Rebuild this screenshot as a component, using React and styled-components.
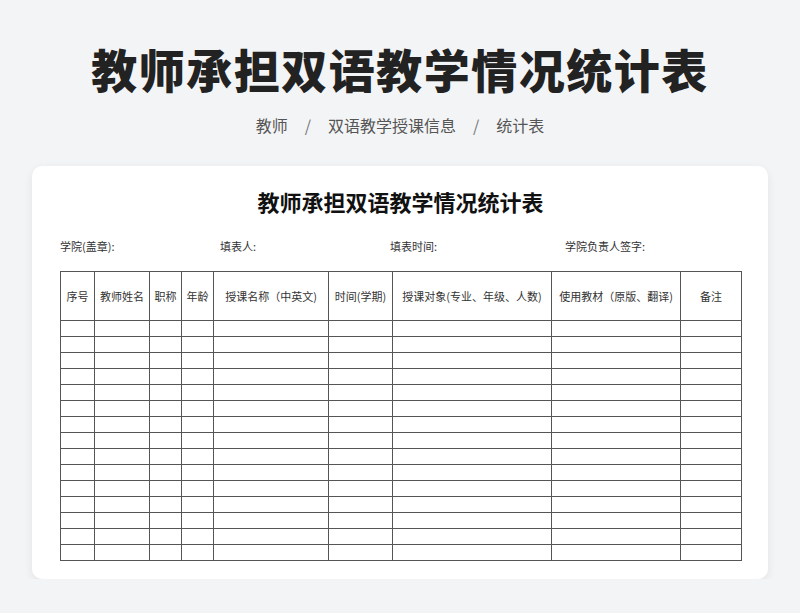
import React from "react";
import styled, { createGlobalStyle } from "styled-components";

const G = createGlobalStyle`
  body{margin:0;background:#f3f4f6;font-family:"Noto Sans CJK SC","Noto Sans",sans-serif;}
`;
const Page = styled.div`display:flex;flex-direction:column;align-items:center;padding-top:36px;`;
const Title = styled.h1`margin:0;font-size:46px;line-height:64px;font-weight:900;color:#222;letter-spacing:1.5px;`;
const Crumbs = styled.div`margin-top:14px;font-size:16px;color:#555;display:flex;gap:17px;line-height:22px;`;
const Sep = styled.span`color:#777;`;
const Card = styled.div`margin-top:30px;width:736px;height:413px;box-sizing:border-box;background:#fff;border-radius:10px;box-shadow:0 3px 10px rgba(0,0,0,0.07);padding:20px 27px 0 28px;`;
const CardTitle = styled.div`text-align:center;font-size:22px;font-weight:700;color:#111;line-height:30px;`;
const Meta = styled.div`display:grid;grid-template-columns:160px 170px 175px 1fr;margin-top:22px;font-size:11px;color:#333;line-height:16px;`;
const Table = styled.table`margin-top:17px;border-collapse:collapse;table-layout:fixed;width:682px;`;
const Th = styled.th`border:1px solid #555;height:48px;font-size:11px;font-weight:400;color:#333;padding:0;white-space:nowrap;`;
const Td = styled.td`border:1px solid #555;height:15px;padding:0;`;

const cols = [["序号",34],["教师姓名",55],["职称",32],["年龄",32],["授课名称（中英文)",115],["时间(学期)",64],["授课对象(专业、年级、人数)",159],["使用教材（原版、翻译)",129],["备注",61]];

export default function App(){
  return <Page><G/>
    <Title>教师承担双语教学情况统计表</Title>
    <Crumbs><span>教师</span><Sep>/</Sep><span>双语教学授课信息</span><Sep>/</Sep><span>统计表</span></Crumbs>
    <Card>
      <CardTitle>教师承担双语教学情况统计表</CardTitle>
      <Meta><span>学院(盖章):</span><span>填表人:</span><span>填表时间:</span><span>学院负责人签字:</span></Meta>
      <Table>
        <colgroup>{cols.map(([n,w])=><col key={n} style={{width:w}}/>)}</colgroup>
        <thead><tr>{cols.map(([n])=><Th key={n}>{n}</Th>)}</tr></thead>
        <tbody>{Array.from({length:15}).map((_,i)=><tr key={i}>{cols.map(([n])=><Td key={n}/>)}</tr>)}</tbody>
      </Table>
    </Card>
  </Page>;
}
